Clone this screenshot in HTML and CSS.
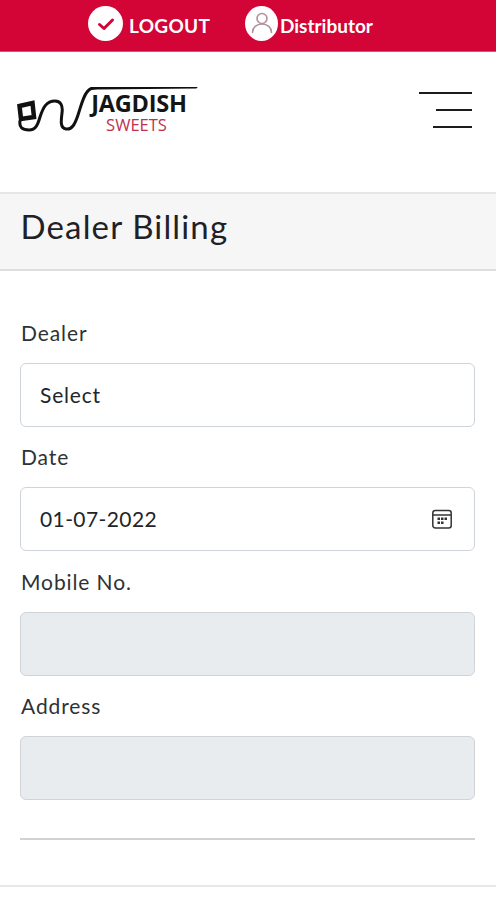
FILE: index.html
```html
<!DOCTYPE html>
<html lang="en">
<head>
    <meta charset="UTF-8">
    <meta name="viewport" content="width=device-width, initial-scale=1.0">
    <title>Dealer Billing</title>
    <link rel="stylesheet" href="styles.css">
</head>
<body>
    <div class="topbar">
        <a class="top-link logout-link">
            <span class="top-icon">
                <svg width="22" height="22" viewBox="0 0 22 22"><path d="M4.500 11.500l4.500 4 8.500-8.500" fill="none" stroke="#d30537" stroke-width="3" stroke-linecap="round" stroke-linejoin="round"/></svg>
            </span>
            LOGOUT
        </a>
        <a class="top-link user-link">
            <span class="top-icon user-icon">
                <svg width="26" height="26" viewBox="0 0 26 26"><circle cx="13" cy="7.500" r="5" fill="none" stroke="#b0929c" stroke-width="1.600"/><path d="M3.500 21.500c0-5 4-8.500 9.500-8.500s9.500 3.500 9.500 8.500" fill="none" stroke="#b0929c" stroke-width="1.600" stroke-linecap="round"/></svg>
            </span>
            Distributor
        </a>
    </div>

    <div class="header">
        <div class="logo">
            <svg class="logo-mark" width="182" height="50" viewBox="0 0 182 50">
                <path d="M2.500 19l13-3 1.500 14-13 2z" fill="none" stroke="#111" stroke-width="4.500"/>
                <path d="M3 34c-1 6 2 9 9 9 7 0 9-6 11-13 3-9 6-16 15-16 6 0 8 5 7 12-1 8-2 15 4 16 6 1 9-5 12-14 3-9 5-18 9-23 3-4 5-4 10-4l99-1" fill="none" stroke="#111" stroke-width="3" stroke-linecap="round"/>
            </svg>
            <div class="logo-text">
                <div class="logo-name">JAGDISH</div>
                <div class="logo-sub">SWEETS</div>
            </div>
        </div>
        <div class="menu-btn">
            <span class="menu-line line-long"></span>
            <span class="menu-line line-short"></span>
            <span class="menu-line line-mid"></span>
        </div>
    </div>

    <div class="title-band">
        <h1>Dealer Billing</h1>
    </div>

    <form class="bill-form">
        <label>Dealer</label>
        <div class="field select-field">Select</div>
        <label>Date</label>
        <div class="field date-field">
            01-07-2022
            <svg width="22" height="22" viewBox="0 0 22 22">
                <rect x="1.800" y="2.500" width="18.400" height="17.500" rx="2.500" fill="none" stroke="#333" stroke-width="1.500"/>
                <path d="M2 7h18" stroke="#333" stroke-width="1.500"/>
                <path d="M6.500 10.800h2.500M10 10.800h2.500M13.500 10.800h2.500M6.500 14.800h2.500M10 14.800h2.500" stroke="#333" stroke-width="2.500"/>
            </svg>
        </div>
        <label>Mobile No.</label>
        <div class="field field-off"></div>
        <label>Address</label>
        <div class="field field-off"></div>
        <hr class="form-rule">
    </form>

    <div class="bottom-line"></div>
</body>
</html>
```

FILE: styles.css
```css
body {
    margin: 0;
    background-color: #ffffff;
    color: #212529;
    font-family: Lato, "Open Sans", Arial, sans-serif;
}
.topbar {
    background-color: #d30537;
    height: 51px;
    border-bottom: 1px solid #e2506f;
    display: flex;
    align-items: center;
    padding-left: 88px;
    color: #ffffff;
    font-size: 19px;
    font-weight: 700;
}
.top-link {
    display: flex;
    align-items: center;
}
.logout-link {
    gap: 6px;
    width: 157px;
    letter-spacing: 0.3px;
}
.top-icon {
    width: 35px;
    height: 35px;
    margin-bottom: 4px;
    border-radius: 50%;
    background-color: #ffffff;
    display: flex;
    align-items: center;
    justify-content: center;
}
.user-icon {
    width: 33px;
    margin-right: 2px;
}
.header {
    height: 140px;
    padding: 0 24px 0 17px;
    display: flex;
    justify-content: space-between;
    box-sizing: border-box;
}
.logo {
    position: relative;
    width: 182px;
    height: 50px;
    margin-top: 35px;
}
.logo-mark {
    position: absolute;
    left: 0;
    top: 0;
}
.logo-text {
    position: relative;
    padding: 4px 0 0 73px;
    text-align: center;
    width: 98px;
}
.logo-name {
    color: #151515;
    font-size: 23.500px;
    line-height: 24px;
    font-weight: 700;
    font-family: "Open Sans", Arial, sans-serif;
    letter-spacing: -0.2px;
}
.logo-sub {
    color: #c0304f;
    font-size: 16.500px;
    line-height: 14px;
    font-family: "Open Sans", Arial, sans-serif;
    margin: 3px 0 0 -5px;
}
.menu-btn {
    width: 53px;
    margin-top: 40px;
    display: flex;
    flex-direction: column;
    align-items: flex-end;
    gap: 15px;
}
.menu-line {
    height: 2px;
    background-color: #1c1c1c;
}
.line-long {
    width: 53px;
}
.line-short {
    width: 36px;
}
.line-mid {
    width: 39px;
}
.title-band {
    background-color: #f6f6f6;
    border-top: 2px solid #e6e6e6;
    border-bottom: 2px solid #dedede;
    height: 75px;
    padding-left: 20.500px;
    display: flex;
    align-items: center;
}
.title-band h1 {
    margin: 0 0 12px;
    font-size: 33px;
    font-weight: 400;
    color: #1e2125;
    letter-spacing: 1.150px;
}
.bill-form {
    padding: 49px 21px 0 20px;
}
.bill-form label {
    display: block;
    font-size: 21px;
    line-height: 25px;
    height: 43px;
    padding-left: 1px;
    color: #2e3236;
    letter-spacing: 0.900px;
}
.field {
    height: 64px;
    box-sizing: border-box;
    border: 1.500px solid #ced4da;
    border-radius: 6px;
    padding: 0 19px 2px;
    margin-bottom: 17.330px;
    display: flex;
    align-items: center;
    font-size: 21px;
    color: #212529;
}
.select-field {
    letter-spacing: 0.800px;
}
.date-field {
    justify-content: space-between;
    padding-right: 21px;
    letter-spacing: 0.400px;
}
.date-field svg {
    margin-top: 2px;
}
.field-off {
    background-color: #e9ecef;
}
.form-rule {
    margin: 38px 0 0;
    border: 0;
    border-top: 2px solid #d2d2d2;
}
.bottom-line {
    margin-top: 45px;
    border-top: 2px solid #e8e8e8;
}
```
